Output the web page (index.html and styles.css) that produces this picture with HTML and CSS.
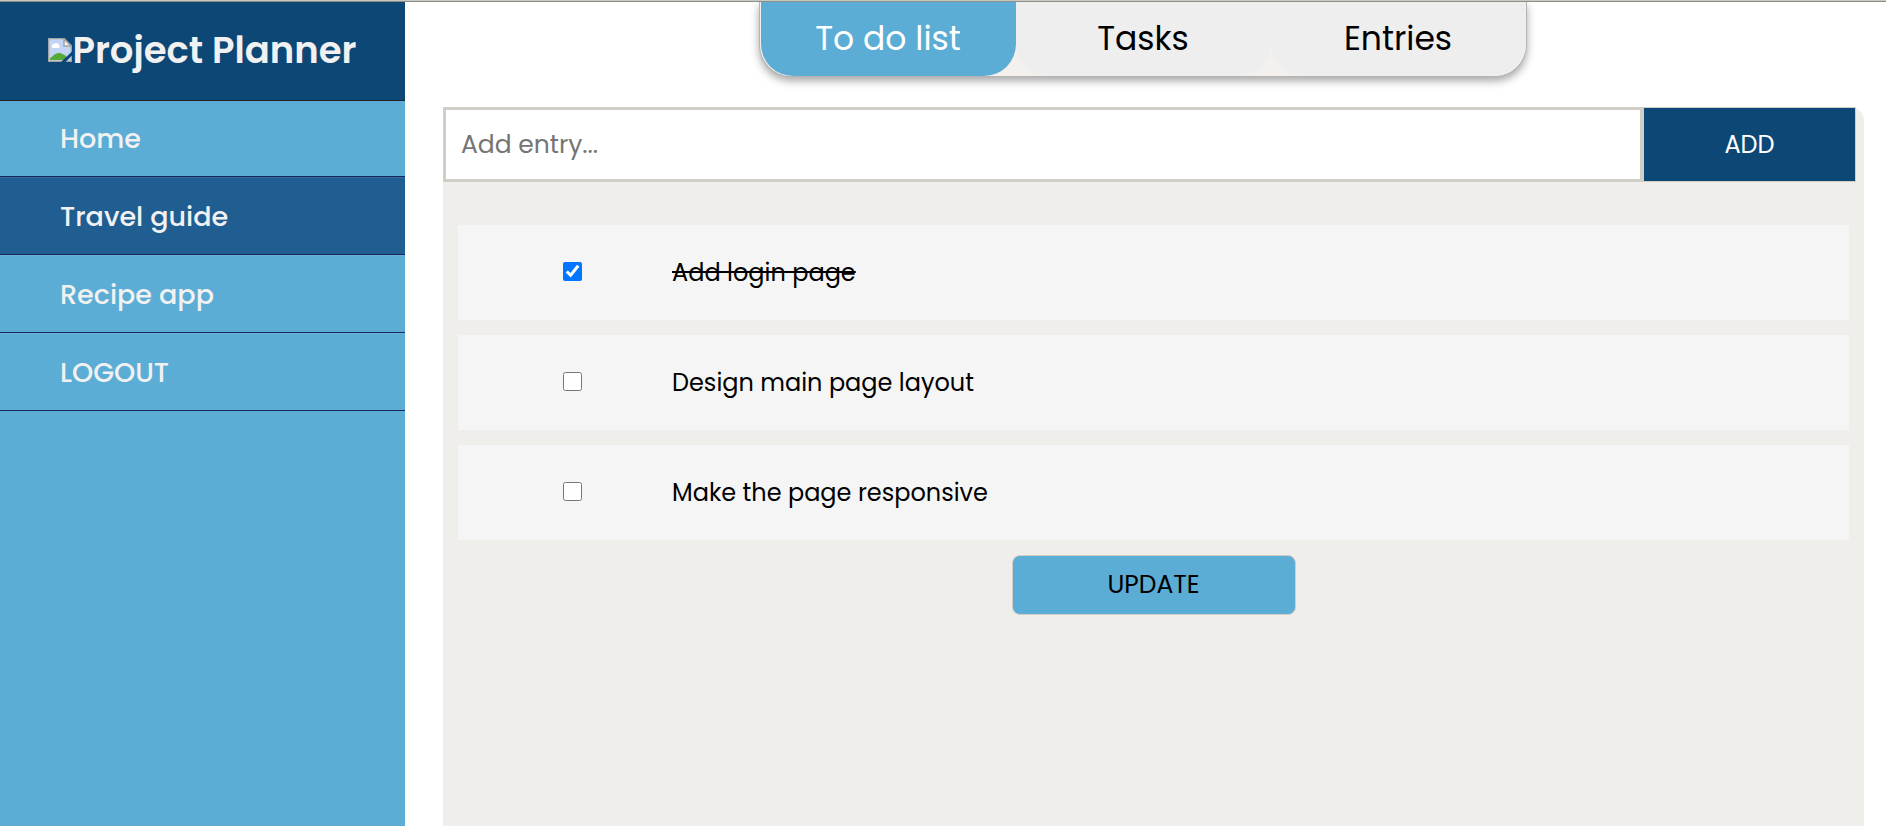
FILE: index.html
```html
<!DOCTYPE html>
<html lang="en">
<head>
  <meta charset="utf-8">
  <meta name="viewport" content="width=device-width, initial-scale=1">
  <title>Project Planner</title>
  <link rel="stylesheet" href="styles.css">
</head>
<body>
  <aside class="sidebar">
    <h1 class="brand">
      <svg class="brand-icon" viewBox="0 0 24 24" aria-hidden="true">
        <path d="M1 1h15l7 7v15H1z" fill="#c3d5f5"/>
        <path d="M4 9a2 2 0 0 1 2-3a3 3 0 0 1 5 1a2 2 0 0 1 0 3H4z" fill="#fff"/>
        <path d="M2 22v-2c3-1 4-5 9-5 3 0 5 2 7 3v4z" fill="#55aa38"/>
        <path d="M0.500 0.500h15.500l7.500 7.500v15.500h-23z" fill="none" stroke="#a3a3a3" stroke-width="1.500"/>
        <path d="M16 1v7h7z" fill="#f5f5f5" stroke="#a3a3a3" stroke-width="1.500"/>
        <path d="M24 13.500v4l-6.500 6.500H13z" fill="#0d4776"/>
      </svg>
      <span>Project Planner</span>
    </h1>
    <nav class="projects" aria-label="Projects">
      <a class="project" href="#home">Home</a>
      <a class="project is-active" href="#travel" aria-current="page">Travel guide</a>
      <a class="project" href="#recipe">Recipe app</a>
      <a class="project" href="#logout">LOGOUT</a>
    </nav>
  </aside>
  <main class="content">
    <nav class="tabs" aria-label="Sections">
      <a class="tab is-active" href="#todo" aria-current="page">To do list</a>
      <a class="tab" href="#tasks">Tasks</a>
      <a class="tab" href="#entries">Entries</a>
    </nav>
    <section class="panel">
      <form class="add-form">
        <input class="add-input" type="text" placeholder="Add entry..." aria-label="Add entry">
        <button class="add-button" type="button">ADD</button>
      </form>
      <form class="todo-form">
        <ul class="todos">
          <li class="todo">
            <input class="check" type="checkbox" id="todo-1" checked>
            <label class="todo-label" for="todo-1">Add login page</label>
          </li>
          <li class="todo">
            <input class="check" type="checkbox" id="todo-2">
            <label class="todo-label" for="todo-2">Design main page layout</label>
          </li>
          <li class="todo">
            <input class="check" type="checkbox" id="todo-3">
            <label class="todo-label" for="todo-3">Make the page responsive</label>
          </li>
        </ul>
        <button class="update-button" type="button">UPDATE</button>
      </form>
    </section>
  </main>
</body>
</html>
```
FILE: styles.css
```css
* {
  box-sizing: border-box;
}

html {
  min-height: 100vh;
  display: flex;
  border-top: 1px solid #c5c9c2;
  background: #fff;
}

body {
  flex: 1;
  min-width: 0;
  margin: 0;
  display: flex;
  border-top: 1px solid #8e8f86;
  color: #000;
  font-family: Poppins, Inter, sans-serif;
  font-size: 24px;
}

a {
  color: inherit;
  text-decoration: none;
}

.sidebar {
  flex: 0 0 405px;
  background: #5badd5;
  color: #f1f1f1;
}

.brand {
  display: flex;
  align-items: center;
  justify-content: center;
  height: 99px;
  margin: 0;
  padding-bottom: 2px;
  border-bottom: 1px solid #222;
  background: #0d4776;
  font-size: 37px;
  font-weight: 600;
  line-height: 48px;
}

.brand-icon {
  width: 24px;
  height: 24px;
}

.project {
  display: flex;
  align-items: center;
  height: 78px;
  padding: 2px 0 0 60px;
  border-top: 1px solid #6ab5da;
  border-bottom: 1px solid #17265c;
  font-size: 27px;
  font-weight: 500;
}

.project:first-child {
  height: 76px;
  padding-top: 0;
  border-top: 0;
}

.project.is-active {
  background: #205e92;
  border-top-color: #336c9e;
}

.content {
  flex: 1;
  min-width: 0;
  display: flex;
  flex-direction: column;
}

.tabs {
  align-self: center;
  display: grid;
  grid-template-columns: repeat(3, 255px);
  margin-right: 6px;
  padding-left: 1px;
  border: 1px solid #b4b4b4;
  border-top: 0;
  border-radius: 0 0 32px 32px;
  background: #f4f0ed;
  box-shadow: 0 4px 8px rgba(0, 0, 0, 0.35);
}

.tab {
  height: 74px;
  border-radius: 0 0 32px 32px;
  background: #eee;
  font-size: 33px;
  line-height: 74px;
  text-align: center;
}

.tab.is-active {
  background: #5badd5;
  color: #fff;
}

.panel {
  flex: 1;
  margin: 30px 22px 0 38px;
  border-top-right-radius: 14px;
  background: #efeeea;
}

.add-form {
  display: flex;
  height: 75px;
  margin-right: 8px;
}

.add-input {
  flex: 1;
  min-width: 0;
  padding: 0 15px;
  border: 3px solid #d1cec7;
  border-radius: 0;
  background: #fff;
  font: inherit;
  font-size: 25px;
}

.add-input::placeholder {
  color: #757575;
}

.add-button {
  width: 213px;
  border: 1px solid #d1cec7;
  background: #0d4776;
  color: #fff;
  font: inherit;
}

.todo-form {
  display: flex;
  flex-direction: column;
  align-items: center;
  gap: 15px;
  padding: 43px 15px 15px;
}

.todos {
  align-self: stretch;
  display: grid;
  gap: 15px;
  margin: 0;
  padding: 0;
  list-style: none;
}

.todo {
  display: flex;
  align-items: center;
  gap: 90px;
  height: 95px;
  padding-left: 105px;
  background: #f5f5f5;
}

.check {
  width: 19px;
  height: 19px;
  margin: 0 0 2px;
}

.check:checked + .todo-label {
  text-decoration: line-through;
}

.update-button {
  width: 284px;
  height: 60px;
  border: 1px solid #d1cec7;
  border-radius: 8px;
  background: #5badd5;
  color: #000;
  font: inherit;
  font-size: 25px;
}
```
